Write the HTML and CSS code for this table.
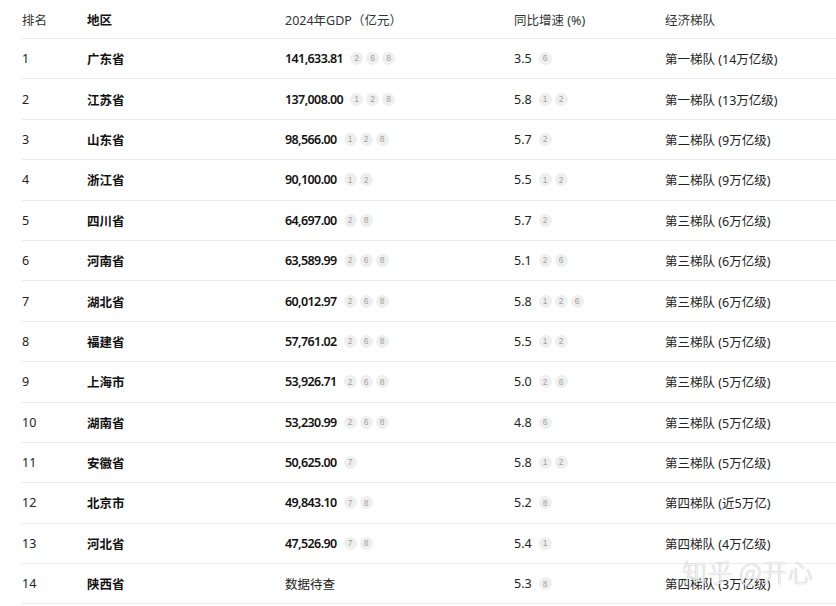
FILE: index.html
```html
<!DOCTYPE html>
<html lang="zh">
<head>
<meta charset="utf-8">
<link rel="stylesheet" href="styles.css">
</head>
<body>
<div class="page">
  <div class="table">
    <div class="row head">
      <div class="c rank">排名</div>
      <div class="c region">地区</div>
      <div class="c gdp">2024年GDP（亿元）</div>
      <div class="c growth">同比增速 (%)</div>
      <div class="c tier">经济梯队</div>
    </div>
    <div class="row"><div class="c rank">1</div><div class="c region">广东省</div><div class="c gdp"><b>141,633.81</b><i>2</i><i>6</i><i>8</i></div><div class="c growth">3.5<i>6</i></div><div class="c tier">第一梯队 (14万亿级)</div></div>
    <div class="row"><div class="c rank">2</div><div class="c region">江苏省</div><div class="c gdp"><b>137,008.00</b><i>1</i><i>2</i><i>8</i></div><div class="c growth">5.8<i>1</i><i>2</i></div><div class="c tier">第一梯队 (13万亿级)</div></div>
    <div class="row"><div class="c rank">3</div><div class="c region">山东省</div><div class="c gdp"><b>98,566.00</b><i>1</i><i>2</i><i>8</i></div><div class="c growth">5.7<i>2</i></div><div class="c tier">第二梯队 (9万亿级)</div></div>
    <div class="row"><div class="c rank">4</div><div class="c region">浙江省</div><div class="c gdp"><b>90,100.00</b><i>1</i><i>2</i></div><div class="c growth">5.5<i>1</i><i>2</i></div><div class="c tier">第二梯队 (9万亿级)</div></div>
    <div class="row"><div class="c rank">5</div><div class="c region">四川省</div><div class="c gdp"><b>64,697.00</b><i>2</i><i>8</i></div><div class="c growth">5.7<i>2</i></div><div class="c tier">第三梯队 (6万亿级)</div></div>
    <div class="row"><div class="c rank">6</div><div class="c region">河南省</div><div class="c gdp"><b>63,589.99</b><i>2</i><i>6</i><i>8</i></div><div class="c growth">5.1<i>2</i><i>6</i></div><div class="c tier">第三梯队 (6万亿级)</div></div>
    <div class="row"><div class="c rank">7</div><div class="c region">湖北省</div><div class="c gdp"><b>60,012.97</b><i>2</i><i>6</i><i>8</i></div><div class="c growth">5.8<i>1</i><i>2</i><i>6</i></div><div class="c tier">第三梯队 (6万亿级)</div></div>
    <div class="row"><div class="c rank">8</div><div class="c region">福建省</div><div class="c gdp"><b>57,761.02</b><i>2</i><i>6</i><i>8</i></div><div class="c growth">5.5<i>1</i><i>2</i></div><div class="c tier">第三梯队 (5万亿级)</div></div>
    <div class="row"><div class="c rank">9</div><div class="c region">上海市</div><div class="c gdp"><b>53,926.71</b><i>2</i><i>6</i><i>8</i></div><div class="c growth">5.0<i>2</i><i>6</i></div><div class="c tier">第三梯队 (5万亿级)</div></div>
    <div class="row"><div class="c rank">10</div><div class="c region">湖南省</div><div class="c gdp"><b>53,230.99</b><i>2</i><i>6</i><i>8</i></div><div class="c growth">4.8<i>6</i></div><div class="c tier">第三梯队 (5万亿级)</div></div>
    <div class="row"><div class="c rank">11</div><div class="c region">安徽省</div><div class="c gdp"><b>50,625.00</b><i>7</i></div><div class="c growth">5.8<i>1</i><i>2</i></div><div class="c tier">第三梯队 (5万亿级)</div></div>
    <div class="row"><div class="c rank">12</div><div class="c region">北京市</div><div class="c gdp"><b>49,843.10</b><i>7</i><i>8</i></div><div class="c growth">5.2<i>8</i></div><div class="c tier">第四梯队 (近5万亿)</div></div>
    <div class="row"><div class="c rank">13</div><div class="c region">河北省</div><div class="c gdp"><b>47,526.90</b><i>7</i><i>8</i></div><div class="c growth">5.4<i>1</i></div><div class="c tier">第四梯队 (4万亿级)</div></div>
    <div class="row"><div class="c rank">14</div><div class="c region">陕西省</div><div class="c gdp">数据待查</div><div class="c growth">5.3<i>8</i></div><div class="c tier">第四梯队 (3万亿级)</div></div>
  </div>
  <div class="watermark">知乎 @开心</div>
</div>
</body>
</html>
```

FILE: styles.css
```css
html, body {
  margin: 0;
  padding: 0;
  background: #fff;
}
.page {
  position: relative;
  width: 836px;
  height: 606px;
  overflow: hidden;
  font-family: "Noto Sans", "Noto Sans CJK SC", sans-serif;
  font-size: 12.5px;
  color: #222;
}
.table {
  margin-left: 22px;
}
.row {
  display: grid;
  grid-template-columns: 65px 198px 229px 151px 1fr;
  align-items: center;
  height: 40.4px;
  box-sizing: border-box;
  border-bottom: 1px solid #ececec;
}
.row.head {
  height: 39px;
  color: #333;
}
.c {
  display: flex;
  align-items: center;
  white-space: nowrap;
}
.region {
  font-weight: 700;
  color: #111;
}
.gdp b {
  font-weight: 600;
  color: #111;
  letter-spacing: -0.6px;
}
.c i {
  font-style: normal;
  display: inline-flex;
  align-items: center;
  justify-content: center;
  width: 13px;
  height: 13px;
  border-radius: 50%;
  background: #efefef;
  color: #a0a0a0;
  font-family: "Liberation Sans", sans-serif;
  font-size: 8.5px;
  margin-left: 3px;
  line-height: 1;
}
.c b + i, .growth i:first-of-type {
  margin-left: 7px;
}
.watermark {
  position: absolute;
  left: 682px;
  top: 553px;
  font-family: "Noto Sans CJK SC", sans-serif;
  font-weight: 300;
  font-size: 25px;
  color: rgba(255, 255, 255, 0.9);
  text-shadow: 0 0 1px rgba(0, 0, 0, 0.25), 0 0 1px rgba(0, 0, 0, 0.2);
  letter-spacing: 0.5px;
  pointer-events: none;
}
```
